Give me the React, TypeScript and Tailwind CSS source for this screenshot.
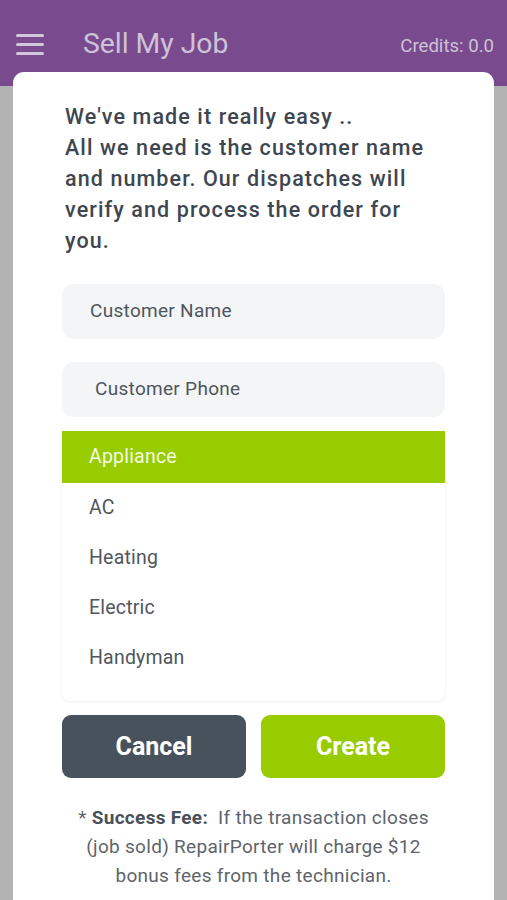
import React from "react";

export default function App() {
  const items = ["AC", "Heating", "Electric", "Handyman"];
  return (
    <div className="w-[507px] h-[900px] overflow-hidden bg-[#b3b3b3] relative" style={{ fontFamily: "Roboto, 'Noto Sans', sans-serif" }}>
      <div className="h-[86px] bg-[#7a4a8e] flex items-start pt-[27px]">
        <div className="w-[28px] ml-[16px] mt-[7px] flex flex-col gap-[6px]">
          <div className="h-[3px] bg-[#d2c6da] rounded-sm" />
          <div className="h-[3px] bg-[#d2c6da] rounded-sm" />
          <div className="h-[3px] bg-[#d2c6da] rounded-sm" />
        </div>
        <div className="ml-[39px] text-[28.3px] leading-[33px] text-[#cdc2d6]">Sell My Job</div>
        <div className="ml-auto mr-[13px] mt-[8px] text-[18.6px] leading-[22px] text-[#cdc2d6]">Credits: 0.0</div>
      </div>
      <div className="absolute left-[13px] right-[13px] top-[72px] bottom-0 bg-white rounded-t-[11px]">
        <div className="pl-[52px] pr-[5px] pt-[29px] text-[21.5px] leading-[31px] font-medium tracking-[1.1px] text-[#3e4650] whitespace-nowrap">
          We've made it really easy ..<br />
          All we need is the customer name<br />
          and number. Our dispatches will<br />
          verify and process the order for<br />
          you.
        </div>
        <div className="mx-[49px] mt-[28px] flex flex-col">
          <div className="h-[55px] bg-[#f3f5f7] rounded-[12px] flex items-center pl-[28px] text-[19px] tracking-[0.3px] text-[#4f565e]">Customer Name</div>
          <div className="h-[55px] mt-[23px] bg-[#f3f5f7] rounded-[12px] flex items-center pl-[33px] text-[19px] tracking-[0.3px] text-[#4f565e]">Customer Phone</div>
          <div className="mt-[14px] rounded-b-[8px] shadow-[0_1px_3px_rgba(0,0,0,0.08)] bg-white h-[270px]">
            <div className="h-[52px] bg-[#99cc00] flex items-center pl-[27px] text-[19.5px] tracking-[0.2px] text-[#f2fbe0]">Appliance</div>
            {items.map((t) => (
              <div key={t} className="h-[50px] flex items-center pl-[27px] text-[19.5px] tracking-[0.2px] text-[#4f565e]">{t}</div>
            ))}
          </div>
          <div className="mt-[14px] flex gap-[15px]">
            <div className="flex-1 h-[63px] bg-[#48525d] rounded-[9px] flex items-center justify-center text-white text-[25px] font-bold">Cancel</div>
            <div className="flex-1 h-[63px] bg-[#99cc00] rounded-[9px] flex items-center justify-center text-white text-[25px] font-bold">Create</div>
          </div>
        </div>
        <div className="mt-[25px] text-center text-[19px] leading-[29px] tracking-[0.3px] text-[#5e646b] whitespace-nowrap">
          * <span className="font-bold text-[#4a5058]">Success Fee:</span>&nbsp; If the transaction closes<br />
          (job sold) RepairPorter will charge $12<br />
          bonus fees from the technician.
        </div>
      </div>
    </div>
  );
}
